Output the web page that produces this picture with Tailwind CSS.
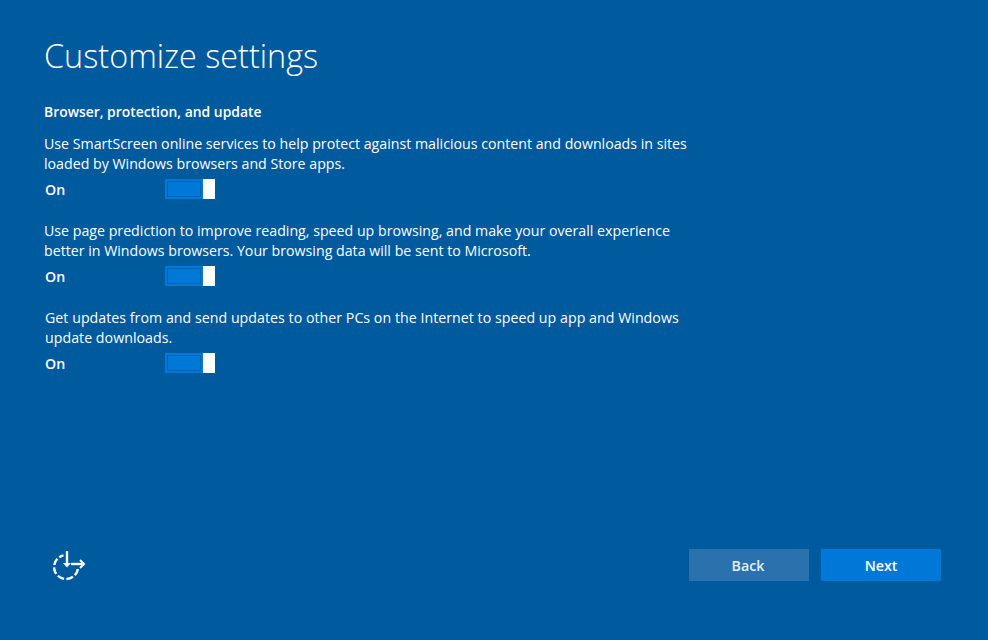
<!DOCTYPE html>
<html><head><script src="https://cdn.jsdelivr.net/npm/@tailwindcss/browser@4"></script></head>
<body class="m-0 bg-[#005a9e]">
<div class="w-[988px] h-[640px] bg-[#005a9e] text-white font-['Open_Sans','Noto_Sans',sans-serif] flex flex-col pl-[44px] pr-[47px] pt-[33px] pb-[59px] overflow-hidden">
<h1 class="text-[32.4px] leading-[44px] font-light">Customize settings</h1>
<div class="w-[660px] mt-[25px] text-[14.2px] leading-[20px] flex-1">
<p class="font-semibold text-[13.9px]">Browser, protection, and update</p>
<div class="mt-[12px]"><p>Use SmartScreen online services to help protect against malicious content and downloads in sites<br>loaded by Windows browsers and Store apps.</p>
<div class="flex items-center mt-[5px] h-[20px]"><span class="w-[121px] font-semibold pl-[1px] pt-[1px]">On</span><span class="w-[50px] h-[20px] bg-[#0078d7] flex"><span class="flex-1 border-2 border-[#0078d7] bg-[#0078d7]"><span class="block h-full border border-[#0063b1]"></span></span><span class="w-[12px] h-[20px] bg-white"></span></span></div></div>
<div class="mt-[22px]"><p>Use page prediction to improve reading, speed up browsing, and make your overall experience<br>better in Windows browsers. Your browsing data will be sent to Microsoft.</p>
<div class="flex items-center mt-[5px] h-[20px]"><span class="w-[121px] font-semibold pl-[1px] pt-[1px]">On</span><span class="w-[50px] h-[20px] bg-[#0078d7] flex"><span class="flex-1 border-2 border-[#0078d7] bg-[#0078d7]"><span class="block h-full border border-[#0063b1]"></span></span><span class="w-[12px] h-[20px] bg-white"></span></span></div></div>
<div class="mt-[22px]"><p class="pl-[1px] tracking-[0.03px]">Get updates from and send updates to other PCs on the Internet to speed up app and Windows<br>update downloads.</p>
<div class="flex items-center mt-[5px] h-[20px]"><span class="w-[121px] font-semibold pl-[1px] pt-[1px]">On</span><span class="w-[50px] h-[20px] bg-[#0078d7] flex"><span class="flex-1 border-2 border-[#0078d7] bg-[#0078d7]"><span class="block h-full border border-[#0063b1]"></span></span><span class="w-[12px] h-[20px] bg-white"></span></span></div></div>
</div>
<div class="flex justify-between items-center h-[32px]">
<svg width="34" height="32" viewBox="0 0 34 32" fill="none" stroke="white" stroke-width="2.4" class="ml-[8px]"><path d="M25.9 20A12 12 0 1 1 11.5 6.3" stroke-dasharray="7 2.4"/><path d="M15 2v14"/><path d="M11 14h8l-4 4.5z" fill="white" stroke="none"/><path d="M19 15h11"/><path d="M28 11l4 4-4 4" stroke-width="2"/></svg>
<div class="flex gap-[12px] text-[14.2px] font-semibold"><button class="w-[120px] h-[32px] pt-[1px] pr-[2px] bg-[#2a72ad] text-[#e6eef5]">Back</button><button class="w-[120px] h-[32px] pt-[1px] bg-[#0078d7]">Next</button></div>
</div>
</div>
</body></html>
